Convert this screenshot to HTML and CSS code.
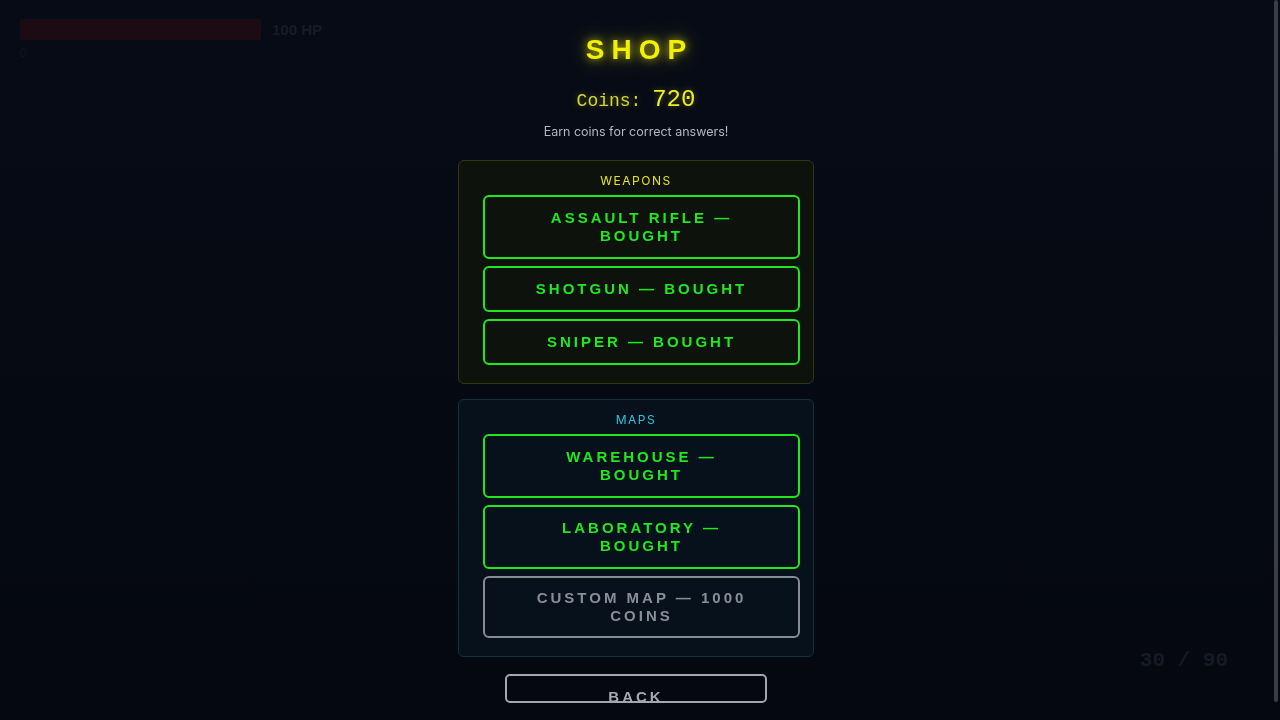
FILE: index.html
```html
<!DOCTYPE html>
<html lang="en">
<head>
    <meta charset="UTF-8">
    <meta name="viewport" content="width=device-width, initial-scale=1.0">
    <title>Shop - Quiz Shooter</title>
    <link rel="stylesheet" href="styles.css">
</head>
<body>

    <div class="hud">
        <div class="hp-row">
            <div class="hp-bar"><div class="hp-fill"></div></div>
            <span class="hp-text">100 HP</span>
        </div>
        <div class="score">0</div>
    </div>
    <div class="ammo">30 / 90</div>

    <div class="shop-overlay">
        <h1 class="shop-title">SHOP</h1>
        <p class="shop-coins">Coins: <span id="coinCount">720</span></p>
        <p class="shop-hint">Earn coins for correct answers!</p>

        <div class="shop-section weapons">
            <h2 class="section-title">WEAPONS</h2>
            <button class="shop-item bought">ASSAULT RIFLE — BOUGHT</button>
            <button class="shop-item bought">SHOTGUN — BOUGHT</button>
            <button class="shop-item bought">SNIPER — BOUGHT</button>
        </div>

        <div class="shop-section maps">
            <h2 class="section-title">MAPS</h2>
            <button class="shop-item bought">WAREHOUSE — BOUGHT</button>
            <button class="shop-item bought">LABORATORY — BOUGHT</button>
            <button class="shop-item locked">CUSTOM MAP — 1000 COINS</button>
        </div>

        <button class="back-button">BACK</button>

        <div class="scroll-thumb"></div>
    </div>

</body>
</html>
```

FILE: styles.css
```css
* {
    margin: 0;
    padding: 0;
    box-sizing: border-box;
}

body {
    width: 1280px;
    height: 720px;
    overflow: hidden;
    background: linear-gradient(180deg, #070b16 0%, #05080f 100%);
    font-family: 'Liberation Sans', Arial, sans-serif;
}

/* game hud, dimmed under the shop */
.hud {
    position: absolute;
    top: 19px;
    left: 20px;
}

.hp-row {
    display: flex;
    align-items: center;
    gap: 11px;
}

.hp-bar {
    width: 241px;
    height: 21px;
    background: #0d0f18;
    border-radius: 2px;
}

.hp-fill {
    width: 100%;
    height: 100%;
    background: #1c0b12;
    border-radius: 2px;
}

.hp-text {
    font-size: 15px;
    font-weight: bold;
    color: #161b27;
}

.score {
    margin-top: 6px;
    font-size: 12px;
    color: #121723;
}

.ammo {
    position: absolute;
    right: 52px;
    bottom: 48px;
    font-family: 'Liberation Mono', monospace;
    font-size: 21px;
    font-weight: bold;
    color: #141a26;
}

/* shop */
.shop-overlay {
    position: fixed;
    inset: 0;
    overflow: hidden;
    padding: 34px 8px 35px 0;
    text-align: center;
}

.scroll-thumb {
    position: absolute;
    top: 0;
    right: 2px;
    width: 4px;
    height: 702px;
    background: #3a3d45;
    border-radius: 2px;
}

.shop-title {
    padding-left: 7px;
    font-size: 28px;
    font-weight: bold;
    letter-spacing: 7px;
    color: #f2f200;
    text-shadow: 0 0 8px rgba(255, 255, 0, 0.7), 0 0 22px rgba(255, 255, 0, 0.45);
    line-height: 32px;
}

.shop-coins {
    margin-top: 20px;
    font-family: 'Liberation Mono', monospace;
    font-size: 18px;
    color: #d6d630;
    text-shadow: 0 0 6px rgba(255, 255, 0, 0.35);
    line-height: 27px;
}

.shop-coins span {
    font-size: 24px;
    color: #eeee22;
}

.shop-hint {
    margin-top: 9px;
    font-family: 'Inter', 'Liberation Sans', sans-serif;
    font-size: 12.5px;
    color: #b4b8c0;
    line-height: 16px;
}

.shop-section {
    width: 356px;
    margin: 20px auto 0;
    padding: 13px 13px 11px 13px;
    border: 1px solid;
    border-radius: 6px;
    text-align: right;
}

.shop-section + .shop-section {
    margin-top: 15px;
}

.weapons {
    background: #0e120d;
    border-color: #34360f;
}

.maps {
    background: #07111b;
    border-color: #0f3440;
}

.section-title {
    text-align: center;
    font-family: 'Inter', 'Liberation Sans', sans-serif;
    font-size: 12px;
    font-weight: normal;
    letter-spacing: 1.5px;
    line-height: 14px;
    margin-bottom: 7px;
}

.weapons .section-title {
    color: #e6e61e;
}

.maps .section-title {
    color: #25c6e0;
}

.shop-item {
    display: block;
    width: 317px;
    margin: 0 0 7px auto;
    padding: 12px 40px;
    background: transparent;
    border: 2px solid #1fe81f;
    border-radius: 6px;
    font-family: 'Liberation Sans', Arial, sans-serif;
    font-size: 15px;
    font-weight: bold;
    letter-spacing: 3px;
    line-height: 18px;
    color: #1fe81f;
    cursor: pointer;
}

.shop-item.locked {
    padding: 11px 40px;
    border-color: #878b93;
    color: #8a8e96;
}

.back-button {
    display: block;
    margin: 17px auto 0;
    width: 262px;
    height: 29px;
    padding-top: 12px;
    overflow: hidden;
    background: transparent;
    border: 2px solid #a3a6ad;
    border-radius: 5px;
    font-family: 'Liberation Sans', Arial, sans-serif;
    font-size: 15px;
    font-weight: bold;
    letter-spacing: 3px;
    line-height: 18px;
    color: #a6a9b0;
    cursor: pointer;
}
```
